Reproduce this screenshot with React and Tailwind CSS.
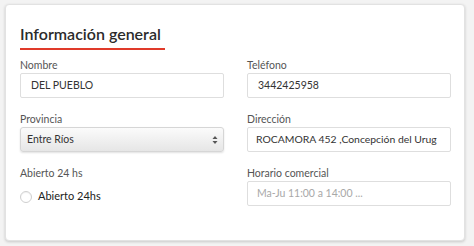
export default function App() {
  const font = { fontFamily: 'Lato, "Liberation Sans", sans-serif' };
  return (
    <div className="w-[474px] h-[246px] bg-[#f3f3f3] pt-[4px] pl-[5px]" style={font}>
      <div className="w-[460px] h-[237px] bg-white rounded-[4px] border border-[#e2e2e2] shadow-[0_1px_3px_rgba(0,0,0,0.18)] pl-[14px] pr-[13px] pt-[17px]">
        <div className="inline-block border-b-2 border-[#e03a2a] pr-[4px] pb-[3px] text-[16px] leading-[22px] font-semibold text-[#2b2b2b]">
          Información general
        </div>
        <div className="grid grid-cols-[204px_204px] gap-x-[23px] mt-[7px]">
          <Field label="Nombre">
            <div className="h-[25px] border border-[#dedede] rounded-[2px] pl-[10px] flex items-center text-[10.5px] text-[#333]">DEL PUEBLO</div>
          </Field>
          <Field label="Teléfono">
            <div className="h-[25px] border border-[#dedede] rounded-[2px] pl-[10px] flex items-center text-[10.5px] text-[#333]">3442425958</div>
          </Field>
          <Field label="Provincia">
            <div className="h-[25px] border border-[#d6d6d6] rounded-[3px] pl-[6px] pr-[5px] flex items-center justify-between text-[10.5px] text-[#333] bg-gradient-to-b from-[#fbfbfb] to-[#e6e6e6] shadow-[0_1px_2px_rgba(0,0,0,0.12)]">
              <span>Entre Ríos</span>
              <svg width="6" height="10" viewBox="0 0 6 10">
                <path d="M3 1 L5.5 4 H0.5 Z" fill="#555" />
                <path d="M3 9 L5.5 6 H0.5 Z" fill="#555" />
              </svg>
            </div>
          </Field>
          <Field label="Dirección">
            <div className="h-[25px] border border-[#dedede] rounded-[2px] pl-[8px] flex items-center text-[10.4px] text-[#333] whitespace-nowrap">ROCAMORA 452 ,Concepción del Urug</div>
          </Field>
          <Field label="Abierto 24 hs">
            <div className="h-[25px] mt-[3px] flex items-center">
              <div className="w-[12px] h-[12px] rounded-full border border-[#cfcfcf] bg-white shadow-[inset_0_1px_1px_rgba(0,0,0,0.06)]" />
              <span className="ml-[6px] text-[11px] text-[#222]">Abierto 24hs</span>
            </div>
          </Field>
          <Field label="Horario comercial">
            <div className="h-[25px] border border-[#dedede] rounded-[2px] pl-[9px] flex items-center text-[10.5px] text-[#a8a8a8]">Ma-Ju 11:00 a 14:00 ...</div>
          </Field>
        </div>
      </div>
    </div>
  );
}

function Field({ label, children }) {
  return (
    <div className="mb-[13px]">
      <div className="h-[16px] text-[10.5px] leading-[16px] text-[#555]">{label}</div>
      {children}
    </div>
  );
}
